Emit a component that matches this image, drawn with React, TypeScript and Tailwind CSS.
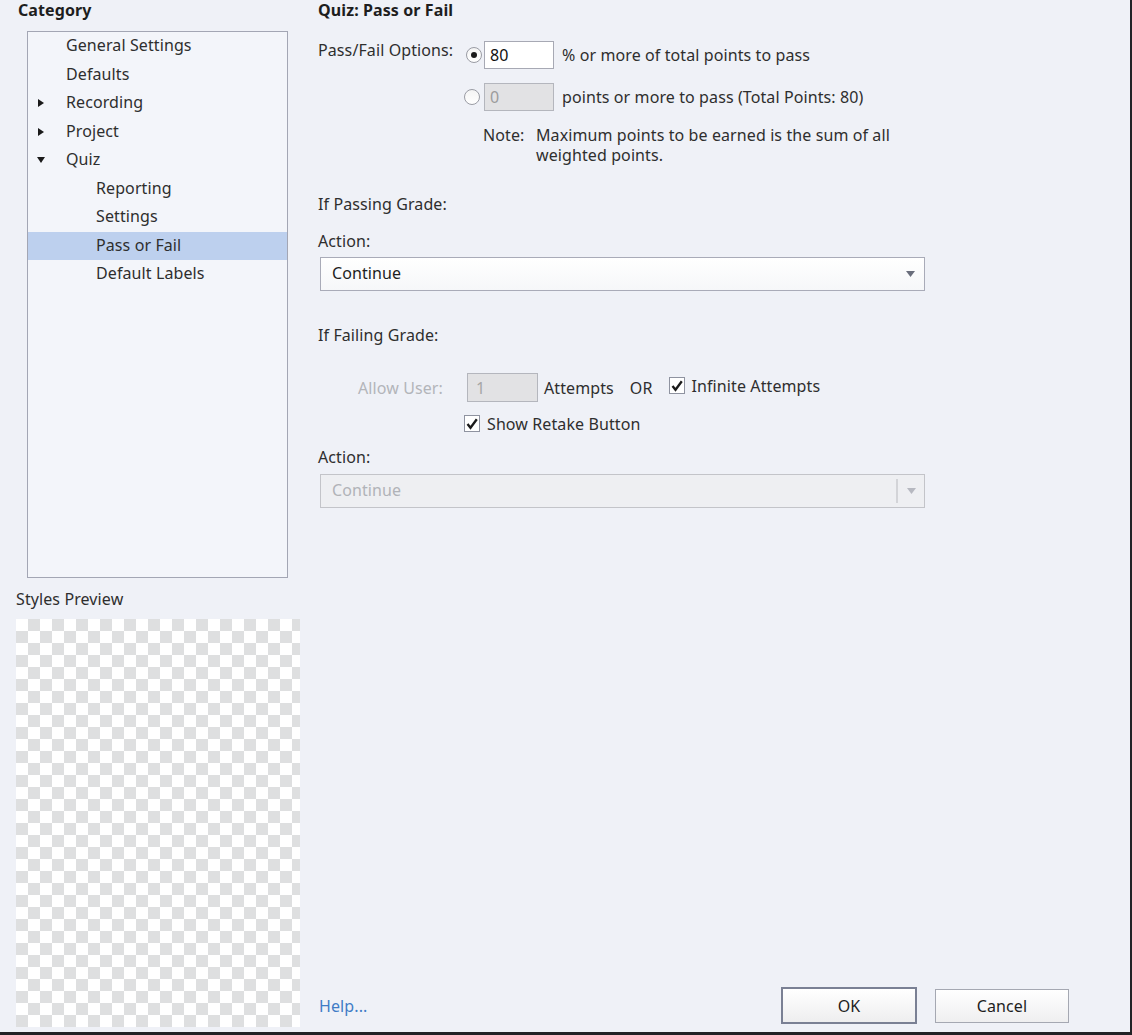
import React from "react";

const treeItems = [
  { label: "General Settings", level: 0 },
  { label: "Defaults", level: 0 },
  { label: "Recording", level: 0, arrow: "right" },
  { label: "Project", level: 0, arrow: "right" },
  { label: "Quiz", level: 0, arrow: "down" },
  { label: "Reporting", level: 1 },
  { label: "Settings", level: 1 },
  { label: "Pass or Fail", level: 1, selected: true },
  { label: "Default Labels", level: 1 },
];

function Arrow({ dir }: { dir?: string }) {
  if (!dir) return <span className="w-[10px]" />;
  return (
    <svg width="10" height="10" viewBox="0 0 10 10" className="shrink-0">
      {dir === "right" ? (
        <path d="M2 1 L8 5 L2 9 Z" fill="#1a1a1a" />
      ) : (
        <path d="M1 2 L9 2 L5 8 Z" fill="#1a1a1a" />
      )}
    </svg>
  );
}

function Radio({ checked }: { checked?: boolean }) {
  return (
    <span className="w-[16px] h-[16px] rounded-full border border-[#9a9ca4] bg-[linear-gradient(#f4f4f4,#ffffff)] flex items-center justify-center shrink-0">
      {checked && <span className="w-[6px] h-[6px] rounded-full bg-[#1a1a1a]" />}
    </span>
  );
}

function Check() {
  return (
    <span className="w-[16px] h-[17px] border border-[#8f93a0] bg-white flex items-center justify-center shrink-0">
      <svg width="12" height="12" viewBox="0 0 12 12">
        <path d="M1.5 6 L4.5 9.8 L10.8 1.2" fill="none" stroke="#1a1a1a" strokeWidth="2.3" />
      </svg>
    </span>
  );
}

function Caret({ color }: { color: string }) {
  return (
    <svg width="9" height="6" viewBox="0 0 9 6">
      <path d="M0 0 L9 0 L4.5 6 Z" fill={color} />
    </svg>
  );
}

export default function App() {
  return (
    <div className="w-[1132px] h-[1035px] bg-[#eff1f7] border-r-2 border-b-[3px] border-[#222226] flex font-['Noto_Sans',sans-serif] text-[16px] tracking-[0.1px] text-[#2e2e2e]">
      {/* left: category tree + preview */}
      <aside className="w-[318px] pl-[16px] flex flex-col">
        <div className="ml-[2px] leading-[20px] font-bold text-[#1e1e1e]">Category</div>
        <div className="ml-[11px] mt-[11px] w-[261px] h-[547px] border border-[#a3a6b4] bg-[#f3f5fa] flex flex-col">
          {treeItems.map((item) => (
            <div
              key={item.label}
              className={`h-[28.5px] flex items-center leading-[20px] ${item.selected ? "bg-[#bdd0ee]" : ""}`}
            >
              <span className="w-[38px] pl-[8px] flex items-center">
                <Arrow dir={item.arrow} />
              </span>
              <span className={`-mt-[2px] ${item.level === 1 ? "pl-[30px]" : ""}`}>{item.label}</span>
            </div>
          ))}
        </div>
        <div className="mt-[11px] leading-[20px]">Styles Preview</div>
        <div className="mt-[10px] w-[284px] h-[408px] bg-[conic-gradient(#dedfe0_25%,#ffffff_0_50%,#dedfe0_0_75%,#ffffff_0)] bg-[length:24px_24px]" />
      </aside>

      {/* right: quiz pass/fail settings */}
      <main className="flex-1 flex flex-col pr-[61px]">
        <div className="leading-[20px] font-bold text-[#1e1e1e]">Quiz: Pass or Fail</div>

        <div className="mt-[21px] flex items-start h-[28px]">
          <span className="w-[148px] leading-[20px] -mt-[1px]">Pass/Fail Options:</span>
          <span className="mt-[6px]"><Radio checked /></span>
          <input
            readOnly
            value="80"
            className="ml-[2px] w-[70px] h-[28px] border border-[#a7a9b4] bg-white px-[5px] outline-none text-[#111]"
          />
          <span className="ml-[8px] leading-[28px]">% or more of total points to pass</span>
        </div>

        <div className="mt-[14px] flex items-center h-[28px]">
          <span className="ml-[146px]"><Radio /></span>
          <input
            readOnly
            disabled
            value="0"
            className="ml-[4px] w-[70px] h-[28px] border border-[#b4b6bd] bg-[#e2e2e4] px-[5px] outline-none text-[#9c9c9c]"
          />
          <span className="ml-[8px]">points or more to pass (Total Points: 80)</span>
        </div>

        <div className="mt-[14px] ml-[165px] flex leading-[20px]">
          <span className="w-[53px]">Note:</span>
          <span>
            Maximum points to be earned is the sum of all
            <br />
            weighted points.
          </span>
        </div>

        <div className="mt-[29px] leading-[20px]">If Passing Grade:</div>
        <div className="mt-[17px] leading-[20px]">Action:</div>
        <div className="mt-[6px] ml-[2px] w-[605px] h-[34px] border border-[#a9abb8] bg-[linear-gradient(#ffffff,#f6f7f9)] flex items-center justify-between pl-[11px] pr-[9px]">
          <span className="text-[#1e1e1e] -mt-[2px]">Continue</span>
          <Caret color="#6a6e7c" />
        </div>

        <div className="mt-[34px] leading-[20px]">If Failing Grade:</div>
        <div className="mt-[28px] flex items-center h-[29px]">
          <span className="ml-[40px] w-[109px] text-[#b3b5ba]">Allow User:</span>
          <input
            readOnly
            disabled
            value="1"
            className="w-[71px] h-[29px] border border-[#b4b6bd] bg-[#e2e2e4] px-[8px] outline-none text-[#a6a6a6]"
          />
          <span className="ml-[6px]">Attempts</span>
          <span className="ml-[16px]">OR</span>
          <span className="ml-[16px] -mt-[4px]"><Check /></span>
          <span className="ml-[7px] -mt-[4px]">Infinite Attempts</span>
        </div>
        <div className="mt-[13px] flex items-center h-[17px]">
          <span className="ml-[146px]"><Check /></span>
          <span className="ml-[7px]">Show Retake Button</span>
        </div>

        <div className="mt-[15px] leading-[20px]">Action:</div>
        <div className="mt-[7px] ml-[2px] w-[605px] h-[34px] border border-[#c3c4c9] bg-[#eeeff2] flex items-center pl-[11px]">
          <span className="flex-1 text-[#b1b3b8] -mt-[2px]">Continue</span>
          <span className="w-[2px] h-[24px] border-x border-[#d3d4d8]" />
          <span className="w-[26px] flex justify-center">
            <Caret color="#b6b8c0" />
          </span>
        </div>

        <div className="flex-1" />

        <div className="flex items-center pb-[8px]">
          <span className="ml-[1px] text-[#3f7cc6] flex-1">Help...</span>
          <button className="w-[136px] h-[37px] border-2 border-[#7a8094] bg-[linear-gradient(#ffffff,#eeeeef)] text-[#1e1e1e]">
            OK
          </button>
          <button className="ml-[18px] w-[134px] h-[34px] border border-[#a5a8b2] bg-[linear-gradient(#ffffff,#efeff0)] text-[#1e1e1e]">
            Cancel
          </button>
        </div>
      </main>
    </div>
  );
}
